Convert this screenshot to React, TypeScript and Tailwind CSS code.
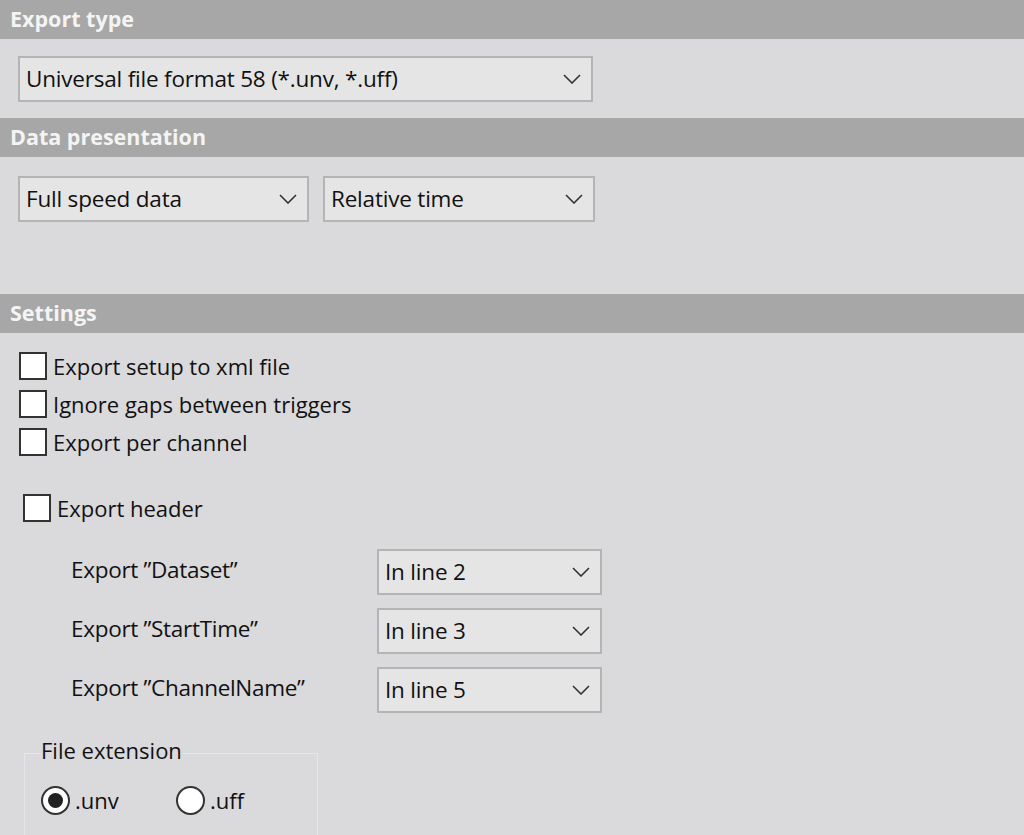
import React from "react";

const seg = { fontFamily: '"Open Sans", "Noto Sans", sans-serif' };

function Chevron() {
  return (
    <svg width="18" height="10" viewBox="0 0 18 10" fill="none" stroke="#333" strokeWidth="1.6">
      <path d="M1 1 L9 9 L17 1" />
    </svg>
  );
}

function Select({ text, w, className = "" }: { text: string; w: string; className?: string }) {
  return (
    <div
      className={`flex items-center justify-between h-[46px] border-2 border-[#b4b4b4] bg-[#e5e5e5] pl-[6px] pr-[10px] text-[22.5px] tracking-[-0.2px] text-[#111] ${w} ${className}`}
      style={seg}
    >
      <span>{text}</span>
      <Chevron />
    </div>
  );
}

function Header({ text }: { text: string }) {
  return (
    <div className="h-[39px] bg-[#a7a7a7] flex items-center pl-[10px] text-[#f4f4f4] font-bold text-[21.5px]" style={seg}>
      {text}
    </div>
  );
}

function Check({ text, className = "" }: { text: string; className?: string }) {
  return (
    <div className={`flex items-center gap-[6px] h-[28px] ${className}`}>
      <div className="w-[28px] h-[28px] border-2 border-[#333] bg-white" />
      <span className="text-[22px] text-[#111]" style={seg}>{text}</span>
    </div>
  );
}

export default function App() {
  return (
    <div className="w-[1024px] h-[835px] overflow-hidden bg-[#dad9db]">
      <Header text="Export type" />
      <div className="h-[79px] pt-[17px] pl-[18px]">
        <Select text="Universal file format 58 (*.unv, *.uff)" w="w-[575px]" />
      </div>
      <Header text="Data presentation" />
      <div className="h-[137px] pt-[19px] pl-[18px] flex gap-[14px] items-start">
        <Select text="Full speed data" w="w-[291px]" />
        <Select text="Relative time" w="w-[272px]" />
      </div>
      <Header text="Settings" />
      <div className="pl-[19px] pt-[19px] flex flex-col gap-[10px]">
        <Check text="Export setup to xml file" />
        <Check text="Ignore gaps between triggers" />
        <Check text="Export per channel" />
      </div>
      <Check text="Export header" className="ml-[23px] mt-[38px]" />
      <div className="ml-[71px] mt-[27px] flex flex-col gap-[13px]">
        {[
          ["Export \u201DDataset\u201D", "In line 2"],
          ["Export \u201DStartTime\u201D", "In line 3"],
          ["Export \u201DChannelName\u201D", "In line 5"],
        ].map(([l, v]) => (
          <div key={l} className="flex items-center">
            <span className="w-[306px] text-[22.5px] tracking-[-0.3px] text-[#111] -mt-[4px]" style={seg}>{l}</span>
            <Select text={v} w="w-[225px]" />
          </div>
        ))}
      </div>
      <div className="ml-[24px] mt-[40px] w-[294px] h-[100px] border border-[#e6e6e6] relative">
        <span className="absolute -top-[20px] left-[15px] bg-[#dad9db] px-[1px] text-[22px] text-[#111]" style={seg}>
          File extension
        </span>
        <div className="flex items-center pt-[30px] pl-[16px]">
          <div className="w-[29px] h-[29px] rounded-full border-2 border-[#333] bg-white flex items-center justify-center">
            <div className="w-[15px] h-[15px] rounded-full bg-[#222]" />
          </div>
          <span className="ml-[5px] text-[22px] text-[#111] w-[101px]" style={seg}>.unv</span>
          <div className="w-[29px] h-[29px] rounded-full border-2 border-[#333] bg-white" />
          <span className="ml-[5px] text-[22px] text-[#111]" style={seg}>.uff</span>
        </div>
      </div>
    </div>
  );
}
